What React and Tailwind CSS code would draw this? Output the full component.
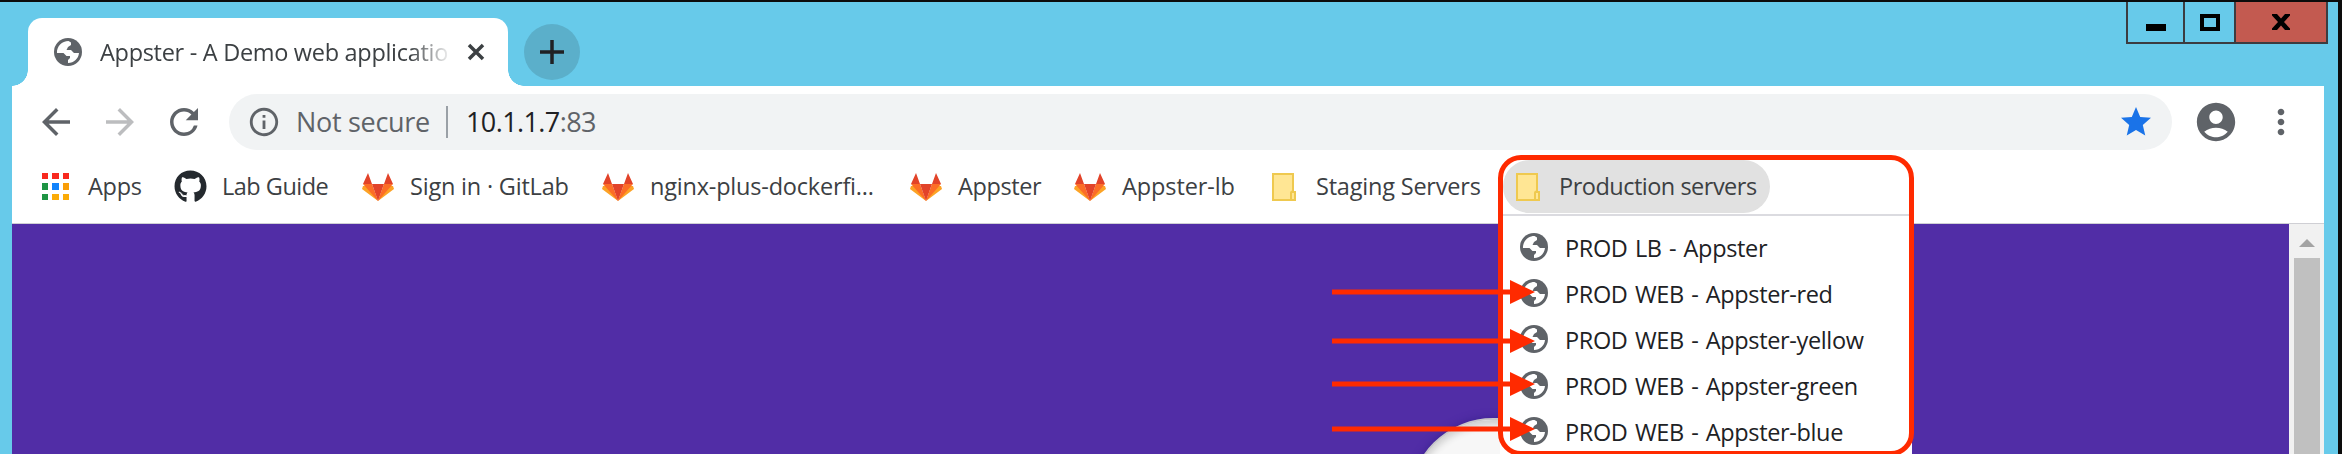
import { MdArrowBack, MdArrowForward, MdRefresh, MdInfoOutline, MdStar, MdAccountCircle, MdMoreVert } from "react-icons/md";
import { FaGithub } from "react-icons/fa";

const Globe = ({ className = "" }) => (
  <svg viewBox="0 0 28 28" className={`size-7 shrink-0 ${className}`}>
    <circle cx="14" cy="14" r="14" fill="#5f6368" />
    <path d="M14.500 3 17 4.500V7l-3 2-1.500 3H17l3 3h5C24.500 20.500 20 25 14 25v-3l2-2v-2h-3.500L9.500 15H3C2.500 8.500 8 3 14.500 3z" fill="white" />
  </svg>
);

const GitLab = () => (
  <svg viewBox="0 0 32 28" className="h-7 w-8 shrink-0">
    <path d="M16 28 0 16 1 13h9zM16 28l16-12-1-3h-9z" fill="#fca326" />
    <path d="M16 28 1 11h9zM16 28l15-17h-9z" fill="#fc6d26" />
    <path d="M10 11h12l-6 17zM1 11 6 0l4 11zM31 11 26 0l-4 11z" fill="#e24329" />
  </svg>
);

const Folder = () => (
  <svg viewBox="0 0 24 28" className="h-7 w-6 shrink-0">
    <path d="M1 1h20v18h2v8H1z" fill="#ffe694" stroke="#efc94f" strokeWidth="2" />
    <path d="M19 27v-7q0-1.500 1.500-1.500T22 20" fill="none" stroke="#efc94f" strokeWidth="2" />
  </svg>
);

const AppsGrid = () => (
  <div className="grid h-[27px] w-[27px] shrink-0 grid-cols-3 gap-1">
    <i className="bg-[#f8291f]" /><i className="bg-[#f8291f]" /><i className="bg-[#f8291f]" />
    <i className="bg-[#1e9444]" /><i className="bg-[#1283fb]" /><i className="bg-[#f99d07]" />
    <i className="bg-[#1e9444]" /><i className="bg-[#fbab06]" /><i className="bg-[#fbab06]" />
  </div>
);

const Bookmark = ({ icon, label, className, text }) => (
  <div className={`flex shrink-0 items-center ${className}`}>
    {icon}
    <span className={`whitespace-nowrap ${text}`}>{label}</span>
  </div>
);

const servers = [
  "PROD LB - Appster",
  "PROD WEB - Appster-red",
  "PROD WEB - Appster-yellow",
  "PROD WEB - Appster-green",
  "PROD WEB - Appster-blue",
];

const Arrow = ({ className }) => (
  <svg viewBox="0 0 203 24" className={`absolute left-[1332px] h-6 w-[203px] ${className}`}>
    <path d="M0 9.500h178V0l25 12-25 12v-9.500H0z" fill="#ff2a00" />
  </svg>
);

export default function App() {
  return (
    <div className="relative flex h-[454px] w-[2342px] flex-col overflow-hidden border-r-4 border-t-2 border-[#0c0c0c] bg-[#67caea] pl-3 pr-[14px] font-['Open_Sans',sans-serif] text-[#3c4043]">
      <header className="flex h-[84px] shrink-0 items-start">
        <div className="relative ml-4 mt-4 flex h-[68px] w-[480px] items-center rounded-t-[14px] bg-white">
          <div className="absolute -left-4 bottom-0 size-4 bg-[radial-gradient(circle_at_0_0,#67caea_15.500px,white_16px)]" />
          <div className="absolute -right-4 bottom-0 size-4 bg-[radial-gradient(circle_at_100%_0,#67caea_15.500px,white_16px)]" />
          <Globe className="ml-[26px]" />
          <div className="ml-[18px] w-[352px] overflow-hidden whitespace-nowrap pt-px text-[23.500px] tracking-[-0.3px] [mask-image:linear-gradient(90deg,black_88%,transparent)]">Appster - A Demo web applicatio</div>
          <svg viewBox="0 0 16 16" className="ml-[16px] size-4 overflow-visible"><path d="M1 1l14 14M15 1 1 15" stroke="#3c4043" strokeWidth="3.500" /></svg>
        </div>
        <div className="ml-4 mt-[22px] flex size-14 items-center justify-center rounded-full bg-[#5bafca]">
          <svg viewBox="0 0 24 24" className="size-6"><path d="M12 0v24M0 12h24" stroke="#202124" strokeWidth="3.500" /></svg>
        </div>
        <div className="-mr-[4px] ml-auto flex h-[42px] w-[202px] border-2 border-t-0 border-[#3c3c40]">
          <div className="flex w-[55px] items-center justify-center"><i className="mt-[10px] h-[7px] w-5 bg-black" /></div>
          <div className="flex w-[53px] items-center justify-center border-x-2 border-[#3c3c40]"><i className="h-[17px] w-5 border-4 border-black" /></div>
          <div className="flex grow items-center justify-center bg-[#c35a50]">
            <svg viewBox="0 0 18 16" className="h-4 w-[18px]"><path d="M0 0h5l4 4.500L13 0h5v1.500L12 8l6 6.500V16h-5l-4-4.500L5 16H0v-1.500L6 8 0 1.500z" /></svg>
          </div>
        </div>
      </header>
      <div className="flex h-[138px] shrink-0 flex-col bg-white">
        <div className="flex h-[72px] items-center text-[#5f6368]">
          <MdArrowBack className="ml-[23px] size-[42px]" />
          <MdArrowForward className="ml-[22px] size-[42px] text-[#bcbdbf]" />
          <MdRefresh className="ml-[22px] size-[42px]" />
          <div className="ml-[24px] flex h-14 w-[1943px] items-center rounded-full bg-[#f1f3f4] pl-[18px] pr-[18px] text-[27px]">
            <MdInfoOutline className="size-[34px]" />
            <span className="ml-[15px] w-[150px] whitespace-nowrap pt-px tracking-[-0.3px]">Not secure</span>
            <i className="h-8 w-0.5 bg-[#9aa0a6]" />
            <span className="ml-[18px] whitespace-nowrap pt-px tracking-[-0.6px]"><span className="text-[#202124]">10.1.1.7</span>:83</span>
            <MdStar className="ml-auto size-9 text-[#1a73e8]" />
          </div>
          <MdAccountCircle className="ml-[21px] size-[46px]" />
          <MdMoreVert className="ml-[22px] size-10" />
        </div>
        <div className="flex h-[65px] items-start pl-[30px] pt-[2px] text-[23.500px]">
          <div className="flex h-[53px] items-center">
            <Bookmark className="w-[132px]" icon={<AppsGrid />} text="ml-[19px] tracking-[-0.3px]" label="Apps" />
            <Bookmark className="w-[188px]" icon={<FaGithub className="size-[33px] shrink-0 text-[#24292e]" />} text="ml-[15px] tracking-[-0.5px]" label="Lab Guide" />
            <Bookmark className="w-[240px]" icon={<GitLab />} text="ml-4 tracking-[-0.2px]" label="Sign in · GitLab" />
            <Bookmark className="w-[308px]" icon={<GitLab />} text="ml-4 tracking-[-0.2px]" label="nginx-plus-dockerfi..." />
            <Bookmark className="w-[164px]" icon={<GitLab />} text="ml-4 tracking-[-0.4px]" label="Appster" />
            <Bookmark className="w-[198px]" icon={<GitLab />} text="ml-4 tracking-[-0.1px]" label="Appster-lb" />
            <Bookmark className="w-[231px]" icon={<Folder />} text="ml-5 tracking-[-0.2px]" label="Staging Servers" />
            <Bookmark className="h-[53px] w-[267px] rounded-full bg-[#e1e1e1] pl-[13px]" icon={<Folder />} text="ml-[19px] tracking-[-0.5px]" label="Production servers" />
          </div>
        </div>
        <div className="h-px bg-[#cfcfd4]" />
      </div>
      <main className="flex grow bg-[#512da6]">
        <div className="relative grow overflow-hidden">
          <div className="absolute left-[1397px] top-[194px] h-[200px] w-[300px] rounded-[84px] border-2 border-[#c7c7c9] bg-[#f7f7f7] shadow-[inset_0_5px_7px_#cfcfcf,0_0_8px_#3b2290]" />
        </div>
        <div className="flex w-[35px] flex-col items-center bg-[#f1f1f1]">
          <svg viewBox="0 0 16 8" className="mt-[15px] h-2 w-4"><path d="M8 0l8 8H0z" fill="#a3a3a3" /></svg>
          <div className="mt-[11px] w-[26px] grow bg-[#c0c0c0]" />
        </div>
      </main>
      <div className="absolute left-[1500px] top-[212px] flex h-[240px] w-[412px] flex-col border-t-2 border-[#dbdbe0] bg-white pt-[8px] text-[23.500px] text-[#202124]">
        {servers.map((label) => (
          <div key={label} className="flex h-[46px] shrink-0 items-center pl-5">
            <Globe />
            <span className="ml-[17px] whitespace-nowrap pt-[3px] tracking-[-0.35px] [word-spacing:1.600px]">{label}</span>
          </div>
        ))}
      </div>
      <div className="absolute left-[1498px] top-[153px] h-[301px] w-[416px] rounded-[23px] border-[5px] border-[#ff2a00]" />
      <Arrow className="top-[278px]" />
      <Arrow className="top-[327px]" />
      <Arrow className="top-[370px]" />
      <Arrow className="top-[415px]" />
    </div>
  );
}
